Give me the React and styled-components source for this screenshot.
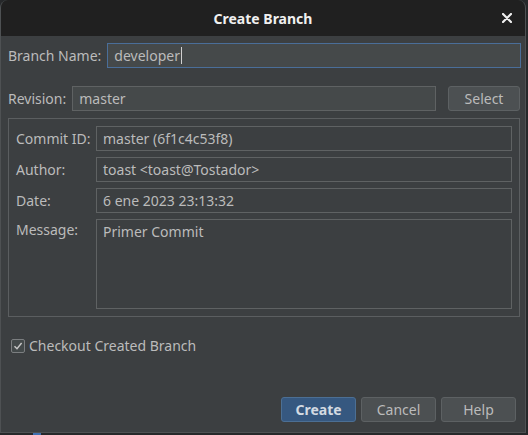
import { Fragment } from "react";
import styled, { createGlobalStyle } from "styled-components";

const GlobalStyle = createGlobalStyle`
  html, body {
    margin: 0;
    padding: 0;
    background: #26282a;
  }
  body {
    font-family: "Noto Sans", "Open Sans", sans-serif;
    font-size: 14px;
    color: #bbbbbb;
  }
`;

const Page = styled.div`
  display: flex;
  flex-direction: column;
  width: 528px;
  height: 435px;
  overflow: hidden;
`;

const Window = styled.div`
  display: flex;
  flex-direction: column;
  width: 526px;
  height: 433px;
  box-sizing: border-box;
  background: #3c3f41;
  border: 1px solid #4e5153;
  border-top: none;
  border-radius: 8px 8px 0 0;
  overflow: hidden;
`;

const TitleBar = styled.div`
  position: relative;
  height: 36px;
  flex-shrink: 0;
  display: flex;
  align-items: center;
  justify-content: center;
  background: #202020;
  color: #f0f0f0;
  font-weight: 700;
  font-size: 14px;
`;

const CloseButton = styled.span`
  position: absolute;
  right: 13px;
  top: 13px;
  width: 10px;
  height: 10px;
  display: flex;
`;

const Body = styled.div`
  flex: 1;
  display: flex;
  flex-direction: column;
  padding: 7px 0 10px 7px;
`;

const Row = styled.div`
  display: flex;
  align-items: center;
  gap: ${(p) => p.gap || 6}px;
  margin-top: ${(p) => p.top || 0}px;
  margin-right: ${(p) => p.right || 0}px;
`;

const Label = styled.label`
  white-space: nowrap;
  line-height: 20px;
  margin-right: ${(p) => p.after || 0}px;
`;

const Input = styled.div`
  flex: 1;
  height: 25px;
  box-sizing: border-box;
  display: flex;
  align-items: center;
  padding: 0 6px;
  background: #45494a;
  border: 1px solid ${(p) => (p.focused ? "#4a6e99" : "#5f6263")};
`;

const Caret = styled.span`
  width: 1px;
  height: 17px;
  background: #d0d0d0;
  margin-left: 1px;
`;

const Button = styled.button`
  width: ${(p) => p.w || 75}px;
  height: 25px;
  box-sizing: border-box;
  border-radius: 3px;
  font-family: inherit;
  font-size: 14px;
  padding: 0;
  background: ${(p) => (p.primary ? "#365880" : "#4c5052")};
  border: 1px solid ${(p) => (p.primary ? "#4c6f94" : "#5d6163")};
  color: ${(p) => (p.primary ? "#d3dae2" : "#bbbbbb")};
  font-weight: ${(p) => (p.primary ? 700 : 400)};
`;

const Panel = styled.div`
  margin-top: 7px;
  width: 512px;
  box-sizing: border-box;
  border: 1px solid #5b5e60;
  padding: 7px;
  display: grid;
  grid-template-columns: 80px 1fr;
  grid-template-rows: 25px 25px 25px 90px;
  row-gap: 6px;
`;

const PanelLabel = styled.div`
  white-space: nowrap;
  line-height: ${(p) => (p.top ? "20px" : "25px")};
  padding-top: ${(p) => (p.top ? 1 : 0)}px;
`;

const Field = styled.div`
  box-sizing: border-box;
  border: 1px solid #5f6263;
  padding: ${(p) => (p.multi ? "2px 6px" : "0 6px")};
  line-height: ${(p) => (p.multi ? "20px" : "23px")};
  white-space: pre;
`;

const CheckRow = styled.label`
  display: flex;
  align-items: center;
  gap: 4px;
  margin-top: 19px;
  margin-left: 3px;
`;

const CheckBox = styled.span`
  width: 14px;
  height: 14px;
  box-sizing: border-box;
  border: 1px solid #7b7e80;
  border-radius: 2px;
  background: #43494a;
  display: flex;
  align-items: center;
  justify-content: center;
`;

const Footer = styled.div`
  margin-top: auto;
  display: flex;
  justify-content: flex-end;
  gap: 5px;
  margin-right: 9px;
`;

const Strip = styled.div`
  height: 2px;
  display: flex;
`;

const Dot = styled.span`
  width: 8px;
  height: 2px;
  margin-left: 33px;
  background: #3f6fb0;
`;

const details = [
  ["Commit ID:", "master (6f1c4c53f8)"],
  ["Author:", "toast <toast@Tostador>"],
  ["Date:", "6 ene 2023 23:13:32"],
];

export default function App() {
  return (
    <Page>
      <GlobalStyle />
      <Window>
        <TitleBar>
          Create Branch
          <CloseButton>
            <svg width="10" height="10" viewBox="0 0 10 10">
              <path d="M1 1 L9 9 M9 1 L1 9" stroke="#f0f0f0" strokeWidth="2.2" strokeLinecap="round" />
            </svg>
          </CloseButton>
        </TitleBar>
        <Body>
          <Row right={4}>
            <Label>Branch Name:</Label>
            <Input focused>
              developer
              <Caret />
            </Input>
          </Row>
          <Row top={18} right={5} gap={12}>
            <Label after={-6}>Revision:</Label>
            <Input>master</Input>
            <Button w={72}>Select</Button>
          </Row>
          <Panel>
            {details.map(([label, value]) => (
              <Fragment key={label}>
                <PanelLabel>{label}</PanelLabel>
                <Field>{value}</Field>
              </Fragment>
            ))}
            <PanelLabel top>Message:</PanelLabel>
            <Field multi>Primer Commit</Field>
          </Panel>
          <CheckRow>
            <CheckBox>
              <svg width="10" height="10" viewBox="0 0 10 10">
                <path d="M1.5 5.2 L4 7.8 L8.6 2" stroke="#c8c8c8" strokeWidth="1.4" fill="none" />
              </svg>
            </CheckBox>
            Checkout Created Branch
          </CheckRow>
          <Footer>
            <Button primary>Create</Button>
            <Button>Cancel</Button>
            <Button>Help</Button>
          </Footer>
        </Body>
      </Window>
      <Strip>
        <Dot />
      </Strip>
    </Page>
  );
}
